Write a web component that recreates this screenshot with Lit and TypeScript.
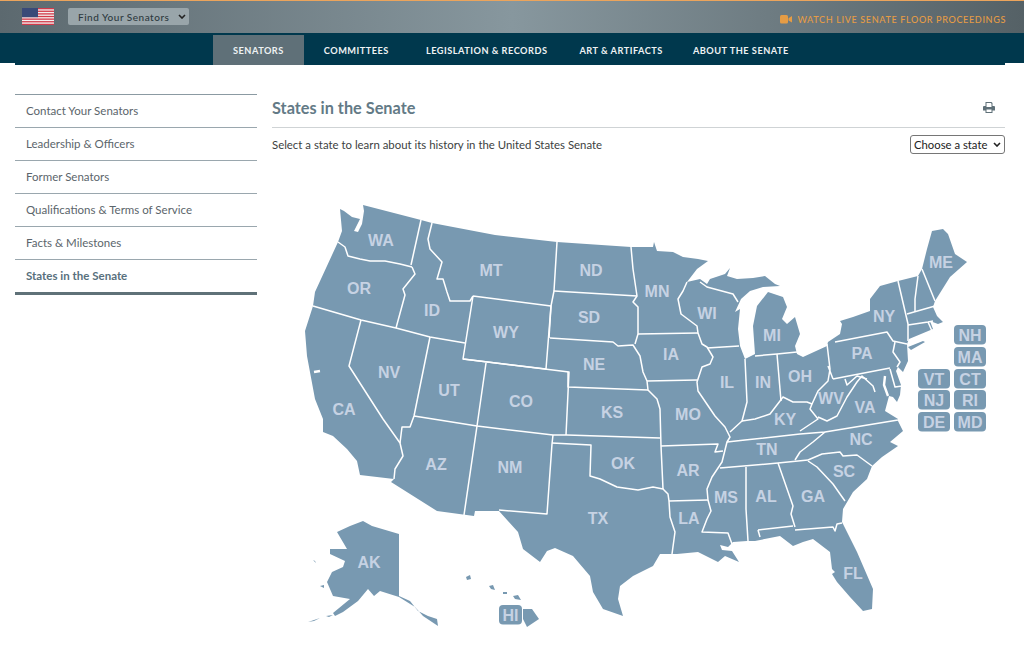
import { LitElement, html, css, svg } from 'lit';
import { customElement } from 'lit/decorators.js';

// page coordinates, the map svg uses a viewBox that lines up with the screenshot
const OUTLINE = `M340 210 L344 212 L352 218 L360 220 L354 232 L358 233 L362 225 L364 212 L363 206
L421 221 L432 224 L495 236 L557 243 L631 248 L653 248 L654 243 L657 252 L673 253 L683 258 L698 260 L708 262
L697 270 L687 283 L700 280 L707 285 L710 280 L725 275 L730 269 L727 277 L737 280 L753 279 L765 277 L775 285 L780 287
L763 288 L750 292 L741 300 L735 313 L740 310 L738 330 L740 347 L745 360 L755 355 L753 327 L757 307 L768 293 L783 298
L787 308 L782 320 L787 325 L795 318 L800 335 L795 347 L797 355 L803 358 L827 347 L828 343 L840 335 L842 325 L840 322
L853 318 L870 312 L870 300 L880 287 L898 282 L918 277 L922 270 L927 250 L932 232 L943 230 L948 235 L955 255 L967 263
L950 278 L935 302 L933 308 L937 317 L943 323 L938 325 L930 322 L933 330 L909 340 L907 345 L908 362 L903 373 L898 368
L896 372 L901 386 L900 396 L897 403 L893 398 L889 397 L885 412 L898 420 L898 422 L903 432 L890 443 L898 447 L882 458
L872 467 L867 480 L853 493 L843 510 L842 523 L857 553 L873 590 L872 610 L863 612 L850 598 L837 583 L832 575 L835 573 L832 570 L830 553
L813 540 L803 543 L793 547 L780 537 L755 542 L747 542 L733 543 L728 548 L720 546 L722 551 L732 552 L739 563 L725 557 L718 563 L698 553 L677 555
L660 555 L653 567 L633 577 L620 587 L618 600 L623 617 L603 610 L593 593 L590 577 L573 557 L555 549 L547 552 L540 563
L523 550 L518 533 L499 512 L475 512 L474 517 L437 512 L391 483 L394 480 L360 476 L357 462 L347 450 L333 437 L323 433
L323 420 L315 400 L307 357 L305 332 L313 307 L315 293 L338 243 L342 232 Z
M908 348 L923 342 L925 343 L911 351 Z`;

const ALASKA = `M363 522 L372 527 L399 535 L399 597 L410 602 L418 612 L428 617 L437 620 L438 627 L432 623 L423 617 L415 608 L407 603
L399 598 L380 592 L374 597 L368 590 L358 602 L343 613 L335 617 L333 614 L350 600 L333 597 L327 583 L332 573
L343 568 L345 562 L330 555 L330 550 L347 550 L337 533 L350 527 Z
M313 561 L315 562 L316 564 Z M320 587 L324 586 L324 589 Z M326 617 L333 616 L329 618 Z M308 623 L320 619 L314 622 Z`;

const HAWAII = `M523 610 L532 610 L539 620 L527 628 L523 620 Z M466 578 L470 576 L471 580 L467 581 Z M489 587 L493 586 L495 591 L491 590 Z
M513 597 L518 596 L521 601 L515 600 Z M503 593 L507 593 L507 595 L503 595 Z`;

const BORDERS = [
  '338,243 345,248 348,257 360,260 370,262 385,262 400,265 412,268',
  '421,221 411,266',
  '412,268 415,275 403,290 405,296 396,329',
  '313,307 361,321 396,329 430,338 465,344',
  '361,321 349,367 383,420 400,444 403,457 395,470 394,480',
  '430,338 414,417 410,428 402,428 400,444',
  '432,224 428,240 430,250 442,263 437,280 443,280 447,293 450,302 470,302 473,297',
  '473,297 551,307 546,370 463,360 473,297',
  '486,364 477,427 464,516',
  '463,360 569,373 566,436',
  '414,417 433,420 477,427 553,436 567,436 660,439',
  '553,436 552,445 547,515 499,511',
  '552,444 591,446 590,477 600,480 617,488 638,491 653,488 663,490 668,495 669,502 670,518 675,533 672,555',
  '557,243 554,292 551,307 549,339',
  '554,292 637,297',
  '631,248 633,270 637,297 633,303 638,308 638,335 635,345',
  '550,339 613,343 618,347 633,346 640,357 643,373 647,382 648,391 657,400 660,410 661,447 663,490',
  '568,373 568,388 648,391',
  '638,335 698,334',
  '647,382 697,381',
  '661,447 718,445 715,453 723,452',
  '669,502 708,501',
  '687,283 683,292 678,300 681,315 697,327 698,334 702,345 707,348 713,358 710,365 702,368 697,383 698,392 715,417 725,428 730,438 727,443 722,463 718,469 712,478 707,490 708,501 711,512 707,520 702,533 728,534 732,545',
  '720,469 778,464 808,461',
  '727,443 745,441 800,435 825,433 898,421',
  '825,433 813,443 800,453 795,461',
  '808,461 822,455 840,453 843,457 857,456 872,467',
  '808,462 817,468 833,485 840,495 845,502',
  '746,468 746,510 748,542',
  '778,464 793,507 791,515 795,528',
  '758,531 760,538',
  '758,531 793,527',
  '795,531 833,528 835,532 837,525 842,524',
  '700,283 707,288 733,295 738,303',
  '707,349 739,347',
  '745,360 747,403 742,422 730,433',
  '742,422 755,420 770,415 780,402 783,398 793,403 807,403 812,405 810,410 818,420 800,432',
  '755,357 777,355 797,353',
  '777,355 781,402',
  '827,345 830,370 828,382 818,392 812,405',
  '818,418 827,422 837,417 847,398 857,383 862,377 873,387 875,393',
  '833,380 890,369',
  '828,367 833,380',
  '835,343 887,333 893,342 907,345',
  '895,343 893,353 900,363 897,368',
  '845,380 847,386 857,377 867,380',
  '890,370 895,388 902,387',
  '898,282 908,325 908,342',
  '918,277 915,300 915,313',
  '922,270 935,302',
  '907,315 935,307',
  '908,326 928,323 933,322',
  '928,323 932,332',
];

const LABELS: [string, number, number][] = [
  ['WA', 381, 241], ['OR', 359, 289], ['ID', 432, 311], ['MT', 491, 271], ['ND', 591, 271], ['SD', 589, 318],
  ['WY', 506, 333], ['NE', 594, 365], ['NV', 389, 373], ['UT', 449, 391], ['CO', 521, 402], ['CA', 344, 410],
  ['AZ', 436, 465], ['NM', 510, 468], ['KS', 612, 413], ['OK', 623, 464], ['TX', 598, 519], ['MN', 657, 292],
  ['IA', 671, 355], ['MO', 688, 415], ['AR', 688, 471], ['LA', 689, 519], ['MS', 726, 498], ['AL', 766, 497],
  ['GA', 813, 497], ['FL', 853, 574], ['SC', 844, 472], ['NC', 861, 440], ['TN', 767, 450], ['KY', 785, 420],
  ['VA', 865, 408], ['WV', 831, 399], ['OH', 800, 377], ['IN', 763, 383], ['IL', 727, 383], ['MI', 772, 336],
  ['WI', 707, 314], ['PA', 862, 354], ['NY', 884, 317], ['ME', 941, 263], ['AK', 369, 563],
];

// the small states that only get a button next to the map
const BOXES: [string, number, number, number][] = [
  ['NH', 954, 326, 32], ['MA', 954, 348, 32], ['CT', 954, 370, 32], ['RI', 954, 391, 32], ['MD', 954, 413, 32],
  ['VT', 918, 370, 32], ['NJ', 918, 391, 32], ['DE', 918, 413, 32], ['HI', 499, 606, 23],
];

const LINKS = ['Contact Your Senators', 'Leadership & Officers', 'Former Senators', 'Qualifications & Terms of Service', 'Facts & Milestones', 'States in the Senate'];
const TABS = ['SENATORS', 'COMMITTEES', 'LEGISLATION & RECORDS', 'ART & ARTIFACTS', 'ABOUT THE SENATE'];

const CHEVRON = css`url("data:image/svg+xml,%3Csvg xmlns='http://www.w3.org/2000/svg' width='8' height='5'%3E%3Cpath d='M1 1l3 3 3-3' fill='none' stroke='%23222' stroke-width='1.6'/%3E%3C/svg%3E")`;

@customElement('app-root')
export class AppRoot extends LitElement {
  static styles = css`
    :host {
      display: block;
      width: 1024px;
      height: 656px;
      overflow: hidden;
      background: #fff;
      font-family: Lato, 'Noto Sans', sans-serif;
      color: #444;
    }
    .top {
      height: 32px;
      border-top: 1px solid #eba45c;
      background: linear-gradient(90deg, #5c696f 0%, #87979e 50%, #556166 100%);
      display: flex;
      align-items: center;
      padding: 0 18px 0 22px;
    }
    .flag { display: block; margin-top: -1px; }
    select {
      appearance: none;
      background-image: ${CHEVRON};
      background-repeat: no-repeat;
    }
    .find {
      margin-left: 14px;
      margin-top: -1px;
      width: 121px;
      height: 17px;
      padding: 0 0 0 10px;
      border: 0;
      border-radius: 2px;
      background-color: #99a5aa;
      background-position: right 3px center;
      color: #2e3a40;
      font: 500 10px Lato, sans-serif;
      letter-spacing: 0.5px;
    }
    .watch {
      margin-left: auto;
      margin-top: 5px;
      display: flex;
      align-items: center;
      gap: 5px;
      color: #e59c45;
      font-size: 9.1px;
      font-weight: 500;
      letter-spacing: 0.62px;
    }
    .nav {
      position: relative;
      height: 32px;
      background: #00384d;
      display: flex;
      padding-left: 213px;
      align-items: flex-end;
    }
    .nav::before,
    .nav::after {
      content: '';
      position: absolute;
      bottom: 0;
      height: 2px;
      background: #fff;
    }
    .nav::before { left: 0; width: 15px; }
    .nav::after { right: 0; width: 19px; }
    .tab {
      height: 30px;
      padding: 0 20px;
      display: flex;
      align-items: center;
      color: #eef2f3;
      font-size: 9.2px;
      font-weight: 700;
      letter-spacing: 0.5px;
      white-space: nowrap;
    }
    .tab.on { background: #5f7078; }
    .tab:nth-child(3) { padding: 0 16px 0 17px; }
    .tab:nth-child(4) { padding: 0 15px 0 16px; }
    .tab:nth-child(5) { padding: 0 15px 0 15px; }
    .page {
      display: grid;
      grid-template-columns: 242px 733px;
      gap: 15px;
      padding: 29px 19px 0 15px;
    }
    .side { border-top: 1px solid #8b9aa2; }
    .side a {
      display: block;
      height: 32px;
      line-height: 32px;
      padding-left: 11px;
      border-bottom: 1px solid #9aa7ae;
      color: #5b656b;
      font-size: 11.5px;
    }
    .side a.on {
      color: #58707d;
      font-weight: 700;
      border-bottom: 3px solid #5f7178;
    }
    .head {
      display: flex;
      justify-content: space-between;
      align-items: center;
      height: 26px;
      padding: 0 10px 7px 0;
      border-bottom: 1px solid #cfd3d5;
    }
    h1 {
      margin: 0;
      font-size: 16.3px;
      font-weight: 700;
      color: #637a86;
    }
    .intro {
      display: flex;
      justify-content: space-between;
      align-items: center;
      margin-top: 7px;
      height: 19px;
      font-size: 11.4px;
      color: #3d3f41;
    }
    .intro select {
      width: 95px;
      height: 19px;
      padding: 0 0 0 3px;
      font: 11.3px Lato, sans-serif;
      background-color: #fff;
      background-position: right 3px center;
      color: #222;
      border: 1px solid #767676;
      border-radius: 3px;
    }
    .map { display: block; margin-top: 15px; }
    .land { fill: #7899b1; }
    .line { fill: none; stroke: #fff; stroke-width: 1.5; stroke-linejoin: round; }
    .bay { fill: none; stroke: #fff; stroke-width: 2.4; stroke-linejoin: round; }
    .label {
      fill: #c6d2e3;
      font: 700 16px 'Liberation Sans', Arial, sans-serif;
      text-anchor: middle;
      dominant-baseline: central;
    }
  `;

  flag() {
    const stripes = [];
    for (let i = 0; i < 13; i += 2) {
      stripes.push(svg`<rect x="0" y=${i * 1.31} width="32" height="1.31" fill="#d23a4a"></rect>`);
    }
    return html`<svg class="flag" width="32" height="17" viewBox="0 0 32 17">
      <rect width="32" height="17" fill="#f4f0f0"></rect>
      ${stripes}
      <rect width="16" height="9.2" fill="#3a4a78"></rect>
    </svg>`;
  }

  map() {
    return html`<svg class="map" width="734" height="470" viewBox="272 170 734 470">
      <path class="land" d=${OUTLINE}></path>
      <path class="land" d=${ALASKA}></path>
      <path class="land" d=${HAWAII}></path>
      ${BORDERS.map((p) => svg`<polyline class="line" points=${p}></polyline>`)}
      <polyline class="bay" points="885,377 884,386 888,397"></polyline>
      <polyline class="bay" points="314,373 320,372"></polyline>
      ${LABELS.map(([s, x, y]) => svg`<text class="label" x=${x} y=${y}>${s}</text>`)}
      ${BOXES.map(([s, x, y, w]) => svg`
        <rect x=${x} y=${y} width=${w} height="19.5" rx="4" fill="#7899b1"></rect>
        <text class="label" x=${x + w / 2} y=${y + 10}>${s}</text>`)}
    </svg>`;
  }

  render() {
    return html`
      <div class="top">
        ${this.flag()}
        <select class="find"><option>Find Your Senators</option></select>
        <div class="watch">
          <svg width="12" height="9" viewBox="0 0 12 9"><rect width="8" height="8.5" rx="1.5" fill="#e59c45"></rect><path d="M8.5 3.2 L12 1 V7.6 L8.5 5.4 Z" fill="#e59c45"></path></svg>
          WATCH LIVE SENATE FLOOR PROCEEDINGS
        </div>
      </div>
      <div class="nav">
        ${TABS.map((t, i) => html`<div class="tab ${i === 0 ? 'on' : ''}">${t}</div>`)}
      </div>
      <div class="page">
        <div class="side">
          ${LINKS.map((l, i) => html`<a class=${i === 5 ? 'on' : ''}>${l}</a>`)}
        </div>
        <div>
          <div class="head">
            <h1>States in the Senate</h1>
            <svg width="12" height="11" viewBox="0 0 12 11">
              <path fill="#5f7078" d="M2.5 0 H8.5 L9.5 1 V4 H11 Q12 4 12 5 V8.5 H9.5 V11 H2.5 V8.5 H0 V5 Q0 4 1 4 H2.5 Z M3.5 1 V5 H8.5 V1.5 H8 V1 Z M3.5 7.5 V10 H8.5 V7.5 Z"></path>
            </svg>
          </div>
          <div class="intro">
            <span>Select a state to learn about its history in the United States Senate</span>
            <select><option>Choose a state</option></select>
          </div>
          ${this.map()}
        </div>
      </div>
    `;
  }
}
